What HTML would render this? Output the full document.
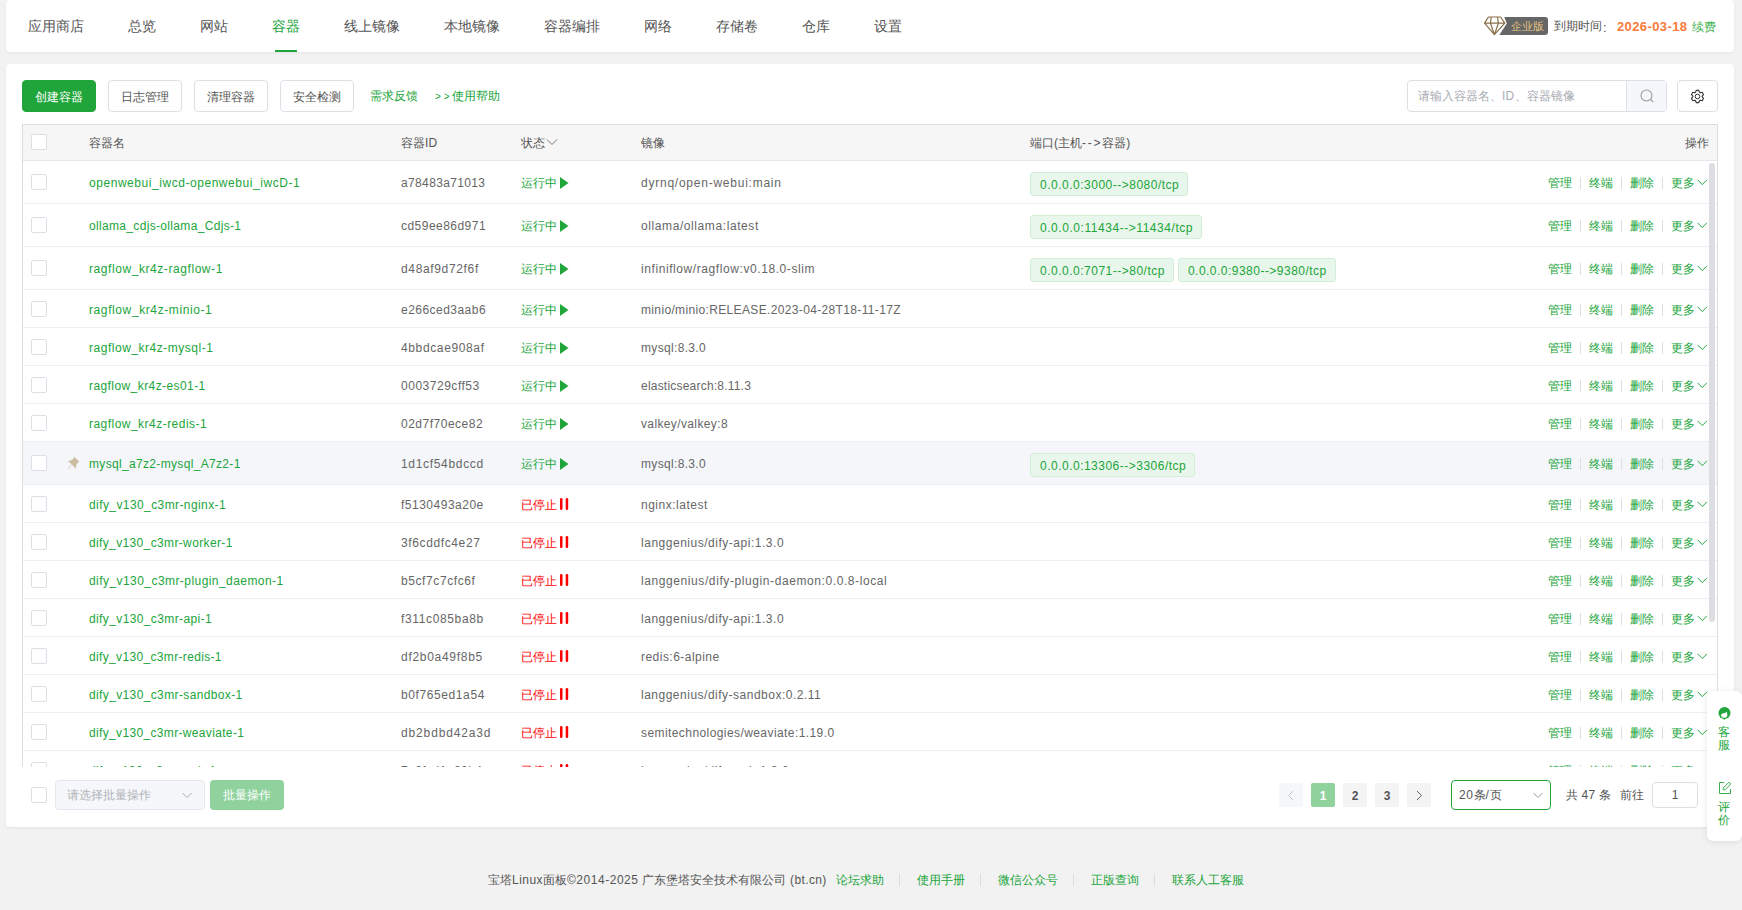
<!DOCTYPE html><html><head><meta charset="utf-8"><style>*{box-sizing:border-box;margin:0;padding:0}
html,body{width:1742px;height:910px;overflow:hidden;background:#f2f2f2;font-family:"Liberation Sans",sans-serif;color:#666;font-size:12px;font-weight:500}
.abs{position:absolute}
.card{position:absolute;background:#fff;border-radius:4px;box-shadow:0 1px 3px rgba(0,0,0,.06)}
.nav{left:6px;top:0;width:1728px;height:52px}
.nav .it{position:absolute;top:0;height:52px;line-height:52px;font-size:14px;color:#555;white-space:nowrap}
.nav .on{color:#20a53a}
.nav .ul{position:absolute;height:2px;background:#20a53a;top:50px}
.badge{left:1505px;top:17px;width:36px;height:18px;color:#e6c37f;font-size:11px;line-height:18px;white-space:nowrap}
.exp{top:17px;height:18px;line-height:18px;font-size:13px;color:#555;white-space:nowrap}
.date{color:#f97b3c;font-weight:bold;top:18px}
.renew{color:#3fb34f;font-size:12px;font-weight:500;top:18px}
.main{left:6px;top:64px;width:1728px;height:763px}
.btn{position:absolute;top:80px;height:32px;border:1px solid #dcdfe6;border-radius:4px;background:#fff;color:#555;font-size:12px;line-height:31px;padding-top:1px;text-align:center}
.btn.g{background:#20a53a;border-color:#20a53a;color:#fff}
.lnk{position:absolute;top:80px;height:32px;line-height:32px;color:#20a53a;font-size:12px;white-space:nowrap}
.srch{left:1407px;top:80px;width:260px;height:32px;border:1px solid #dcdfe6;border-radius:4px;background:#fff;overflow:hidden}
.ph{left:10px;top:0;line-height:30px;color:#a8abb2;font-size:12px;white-space:nowrap}
.sapp{left:218px;top:0;width:40px;height:30px;background:#f5f7fa;border-left:1px solid #dcdfe6}
.gear{left:1677px;top:80px;width:41px;height:32px;border:1px solid #dcdfe6;border-radius:4px;background:#fff}
.tbl{position:absolute;left:22px;top:124px;width:1696px;height:643px;overflow:hidden;border-left:1px solid #ddd;border-right:1px solid #ddd;border-top:1px solid #ddd}
.th{position:absolute;left:0;top:0;width:1694px;height:36px;background:#f6f6f6;border-bottom:1px solid #e4e7ed}
.hd{top:0;line-height:36px;color:#555}
.tr{position:absolute;left:0;width:1694px;border-bottom:1px solid #ebeef5;background:#fff}
.tr.hl{background:#f4f6fa}
.c{position:absolute;white-space:nowrap;font-size:12px}
.cb{position:absolute;width:16px;height:16px;border:1px solid #dcdfe6;border-radius:2px;background:#fff}
.nm{color:#20a53a}
.run{color:#20a53a}
.stop{color:#f00}
.tag{display:inline-block;vertical-align:top;margin-right:4px;height:24px;line-height:22px;padding:1px 8px 0 9px;border:1px solid #d2eed7;background:#e9f6eb;color:#20a53a;border-radius:3px;font-size:12px;white-space:nowrap}
.ops{position:absolute;right:9px;white-space:nowrap;color:#20a53a;font-size:12px}
.sep{display:inline-block;width:1px;height:12px;background:#dcdfe6;margin:0 8px;vertical-align:-2px}
.sb{position:absolute;left:1686px;top:38px;width:6px;height:459px;border-radius:3px;background:#dddee1}
.bsel{left:55px;top:780px;width:150px;height:30px;border:1px solid #e4e7ed;border-radius:4px;background:#f5f7fa}
.bbtn{left:210px;top:780px;width:74px;height:30px;border-radius:4px;background:#90d29d;color:#fff;font-size:12px;line-height:30px;text-align:center}
.pg{position:absolute;top:783px;width:24px;height:24px;border-radius:2px;background:#f4f4f5;color:#555;font-weight:bold;text-align:center;line-height:26px;font-size:12px}
.psel{left:1451px;top:780px;width:100px;height:30px;border:1px solid #20a53a;border-radius:4px;background:#fff}
.ptot{left:1566px;top:780px;line-height:30px;color:#555;font-size:12px;white-space:nowrap}
.pin{left:1652px;top:782px;width:46px;height:26px;border:1px solid #dcdfe6;border-radius:4px;background:#fff;text-align:center;line-height:24px;color:#555;font-size:12px}
.fpanel{left:1707px;top:691px;width:35px;height:150px;background:#fff;border-radius:6px;box-shadow:0 1px 6px rgba(0,0,0,.1)}
.fchar{left:11px;width:14px;line-height:13px;font-size:12px;color:#20a53a}
.foot{position:absolute;top:870px;height:20px;line-height:20px;font-size:12px;color:#555;white-space:nowrap}
.fl{color:#20a53a}
.fsep{position:absolute;top:874px;width:1px;height:12px;background:#ddd}
</style></head><body>
<div class="card nav">
<div class="it" style="left:22px">应用商店</div>
<div class="it" style="left:122px">总览</div>
<div class="it" style="left:194px">网站</div>
<div class="it on" style="left:266px">容器</div>
<div class="it" style="left:338px">线上镜像</div>
<div class="it" style="left:438px">本地镜像</div>
<div class="it" style="left:538px">容器编排</div>
<div class="it" style="left:638px">网络</div>
<div class="it" style="left:710px">存储卷</div>
<div class="it" style="left:796px">仓库</div>
<div class="it" style="left:868px">设置</div>
<div class="ul" style="left:269px;width:22px"></div>
<svg class="abs" style="left:1478px;top:16px" width="22" height="20" viewBox="0 0 22 20"><path d="M4.5 1H16.5L20.8 7.2L10.4 18.6L0.5 7.2Z M0.5 7.2H20.8 M7.2 1L6.5 7.2L10.4 18.6L14.4 7.2L13.5 1" fill="none" stroke="#8b7049" stroke-width="1.2" stroke-linejoin="round"/></svg>
<svg class="abs" style="left:1493px;top:17px" width="49" height="18" viewBox="0 0 49 18"><path d="M5.3 0H46Q49 0 49 3V15Q49 18 46 18H0.3L7.8 6.5Z" fill="#666"/></svg>
<div class="abs badge">企业版</div>
<div class="abs exp" style="left:1548px;font-size:12px">到期时间</div>
<div class="abs exp" style="left:1597px;top:19px">:</div>
<div class="abs exp date" style="left:1611px"><span style="letter-spacing:0.39px">2026-03-18</span></div>
<div class="abs exp renew" style="left:1686px">续费</div>
</div>
<div class="card main"></div>
<div class="btn g" style="left:22px;width:74px">创建容器</div>
<div class="btn" style="left:108px;width:74px">日志管理</div>
<div class="btn" style="left:194px;width:74px">清理容器</div>
<div class="btn" style="left:280px;width:74px">安全检测</div>
<div class="lnk" style="left:370px">需求反馈</div>
<div class="lnk" style="left:435px"><span style="font-size:10px;letter-spacing:2.8px;vertical-align:0.5px">&gt;&gt;</span>使用帮助</div>
<div class="abs srch"><div class="abs ph">请输入容器名、<span style="letter-spacing:0.28px">ID</span>、容器镜像</div><div class="abs sapp"></div><svg class="abs" style="left:232px;top:8px" width="14" height="14" viewBox="0 0 14 14"><circle cx="6.5" cy="6.5" r="5.5" fill="none" stroke="#999" stroke-width="1.1"/><path d="M10.5 10.5L13.2 13.2" stroke="#999" stroke-width="1.1"/></svg></div>
<div class="abs gear"><svg class="abs" style="left:12px;top:8px" width="15" height="15" viewBox="0 0 15 15"><path fill="none" stroke="#333" stroke-width="1.1" stroke-linejoin="round" d="M5.59 3.21 L6.19 1.34 L8.81 1.34 L9.41 3.21 L10.26 3.70 L12.18 3.28 L13.49 5.55 L12.17 7.01 L12.17 7.99 L13.49 9.45 L12.18 11.72 L10.26 11.30 L9.41 11.79 L8.81 13.66 L6.19 13.66 L5.59 11.79 L4.74 11.30 L2.82 11.72 L1.51 9.45 L2.83 7.99 L2.83 7.01 L1.51 5.55 L2.82 3.28 L4.74 3.70Z"/><circle cx="7.5" cy="7.5" r="2.3" fill="none" stroke="#333" stroke-width="1"/></svg></div>
<div class="tbl"><div class="th"><div class="cb" style="left:8px;top:9px"></div>
<div class="c hd" style="left:66px">容器名</div>
<div class="c hd" style="left:378px">容器<span style="letter-spacing:0.28px">ID</span></div>
<div class="c hd" style="left:498px">状态</div>
<div class="c hd" style="left:618px">镜像</div>
<div class="c hd" style="left:1007px">端口<span style="letter-spacing:0.06px">(</span>主机<span style="letter-spacing:1.75px">--&gt;</span>容器<span style="letter-spacing:0.06px">)</span></div>
<svg class="abs" style="left:523px;top:13px" width="12" height="8" viewBox="0 0 12 8"><path d="M1 1.5L6 6.5L11 1.5" fill="none" stroke="#777" stroke-width="1"/></svg>
<div class="c hd" style="left:1662px">操作</div></div>
<div class="tr" style="top:36px;height:43px">
<div class="cb" style="left:8px;top:13px"></div>
<div class="c nm" style="left:66px;top:1px;line-height:42px"><span style="letter-spacing:0.55px">openwebui_iwcd-openwebui_iwcD-1</span></div>
<div class="c" style="left:378px;top:1px;line-height:42px"><span style="letter-spacing:0.36px">a78483a71013</span></div>
<div class="c run" style="left:498px;top:1px;line-height:42px">运行中<svg style="vertical-align:-2px;margin-left:3px" width="9" height="12" viewBox="0 0 9 12"><path d="M0 0L8.5 6L0 12Z" fill="#20a53a"/></svg></div>
<div class="c" style="left:618px;top:1px;line-height:42px"><span style="letter-spacing:0.76px">dyrnq/open-webui:main</span></div>
<div class="c" style="left:1007px;top:11px"><div class="tag"><span style="letter-spacing:0.50px">0.0.0.0:3000--&gt;8080/tcp</span></div></div>
<div class="ops" style="top:1px;line-height:42px">管理<span class="sep"></span>终端<span class="sep"></span>删除<span class="sep"></span>更多<svg style="vertical-align:1px;margin-left:2px" width="11" height="7" viewBox="0 0 11 7"><path d="M0.6 0.8L5.3 5.6L10 0.8" fill="none" stroke="#20a53a" stroke-width="0.95"/></svg></div>
</div>
<div class="tr" style="top:79px;height:43px">
<div class="cb" style="left:8px;top:13px"></div>
<div class="c nm" style="left:66px;top:1px;line-height:42px"><span style="letter-spacing:0.33px">ollama_cdjs-ollama_Cdjs-1</span></div>
<div class="c" style="left:378px;top:1px;line-height:42px"><span style="letter-spacing:0.47px">cd59ee86d971</span></div>
<div class="c run" style="left:498px;top:1px;line-height:42px">运行中<svg style="vertical-align:-2px;margin-left:3px" width="9" height="12" viewBox="0 0 9 12"><path d="M0 0L8.5 6L0 12Z" fill="#20a53a"/></svg></div>
<div class="c" style="left:618px;top:1px;line-height:42px"><span style="letter-spacing:0.59px">ollama/ollama:latest</span></div>
<div class="c" style="left:1007px;top:11px"><div class="tag"><span style="letter-spacing:0.55px">0.0.0.0:11434--&gt;11434/tcp</span></div></div>
<div class="ops" style="top:1px;line-height:42px">管理<span class="sep"></span>终端<span class="sep"></span>删除<span class="sep"></span>更多<svg style="vertical-align:1px;margin-left:2px" width="11" height="7" viewBox="0 0 11 7"><path d="M0.6 0.8L5.3 5.6L10 0.8" fill="none" stroke="#20a53a" stroke-width="0.95"/></svg></div>
</div>
<div class="tr" style="top:122px;height:43px">
<div class="cb" style="left:8px;top:13px"></div>
<div class="c nm" style="left:66px;top:1px;line-height:42px"><span style="letter-spacing:0.57px">ragflow_kr4z-ragflow-1</span></div>
<div class="c" style="left:378px;top:1px;line-height:42px"><span style="letter-spacing:0.65px">d48af9d72f6f</span></div>
<div class="c run" style="left:498px;top:1px;line-height:42px">运行中<svg style="vertical-align:-2px;margin-left:3px" width="9" height="12" viewBox="0 0 9 12"><path d="M0 0L8.5 6L0 12Z" fill="#20a53a"/></svg></div>
<div class="c" style="left:618px;top:1px;line-height:42px"><span style="letter-spacing:0.58px">infiniflow/ragflow:v0.18.0-slim</span></div>
<div class="c" style="left:1007px;top:11px"><div class="tag"><span style="letter-spacing:0.50px">0.0.0.0:7071--&gt;80/tcp</span></div><div class="tag"><span style="letter-spacing:0.48px">0.0.0.0:9380--&gt;9380/tcp</span></div></div>
<div class="ops" style="top:1px;line-height:42px">管理<span class="sep"></span>终端<span class="sep"></span>删除<span class="sep"></span>更多<svg style="vertical-align:1px;margin-left:2px" width="11" height="7" viewBox="0 0 11 7"><path d="M0.6 0.8L5.3 5.6L10 0.8" fill="none" stroke="#20a53a" stroke-width="0.95"/></svg></div>
</div>
<div class="tr" style="top:165px;height:38px">
<div class="cb" style="left:8px;top:11px"></div>
<div class="c nm" style="left:66px;top:2px;line-height:37px"><span style="letter-spacing:0.60px">ragflow_kr4z-minio-1</span></div>
<div class="c" style="left:378px;top:2px;line-height:37px"><span style="letter-spacing:0.47px">e266ced3aab6</span></div>
<div class="c run" style="left:498px;top:2px;line-height:37px">运行中<svg style="vertical-align:-2px;margin-left:3px" width="9" height="12" viewBox="0 0 9 12"><path d="M0 0L8.5 6L0 12Z" fill="#20a53a"/></svg></div>
<div class="c" style="left:618px;top:2px;line-height:37px"><span style="letter-spacing:0.35px">minio/minio:RELEASE.2023-04-28T18-11-17Z</span></div>
<div class="ops" style="top:2px;line-height:37px">管理<span class="sep"></span>终端<span class="sep"></span>删除<span class="sep"></span>更多<svg style="vertical-align:1px;margin-left:2px" width="11" height="7" viewBox="0 0 11 7"><path d="M0.6 0.8L5.3 5.6L10 0.8" fill="none" stroke="#20a53a" stroke-width="0.95"/></svg></div>
</div>
<div class="tr" style="top:203px;height:38px">
<div class="cb" style="left:8px;top:11px"></div>
<div class="c nm" style="left:66px;top:2px;line-height:37px"><span style="letter-spacing:0.52px">ragflow_kr4z-mysql-1</span></div>
<div class="c" style="left:378px;top:2px;line-height:37px"><span style="letter-spacing:0.63px">4bbdcae908af</span></div>
<div class="c run" style="left:498px;top:2px;line-height:37px">运行中<svg style="vertical-align:-2px;margin-left:3px" width="9" height="12" viewBox="0 0 9 12"><path d="M0 0L8.5 6L0 12Z" fill="#20a53a"/></svg></div>
<div class="c" style="left:618px;top:2px;line-height:37px"><span style="letter-spacing:0.33px">mysql:8.3.0</span></div>
<div class="ops" style="top:2px;line-height:37px">管理<span class="sep"></span>终端<span class="sep"></span>删除<span class="sep"></span>更多<svg style="vertical-align:1px;margin-left:2px" width="11" height="7" viewBox="0 0 11 7"><path d="M0.6 0.8L5.3 5.6L10 0.8" fill="none" stroke="#20a53a" stroke-width="0.95"/></svg></div>
</div>
<div class="tr" style="top:241px;height:38px">
<div class="cb" style="left:8px;top:11px"></div>
<div class="c nm" style="left:66px;top:2px;line-height:37px"><span style="letter-spacing:0.42px">ragflow_kr4z-es01-1</span></div>
<div class="c" style="left:378px;top:2px;line-height:37px"><span style="letter-spacing:0.52px">0003729cff53</span></div>
<div class="c run" style="left:498px;top:2px;line-height:37px">运行中<svg style="vertical-align:-2px;margin-left:3px" width="9" height="12" viewBox="0 0 9 12"><path d="M0 0L8.5 6L0 12Z" fill="#20a53a"/></svg></div>
<div class="c" style="left:618px;top:2px;line-height:37px"><span style="letter-spacing:0.21px">elasticsearch:8.11.3</span></div>
<div class="ops" style="top:2px;line-height:37px">管理<span class="sep"></span>终端<span class="sep"></span>删除<span class="sep"></span>更多<svg style="vertical-align:1px;margin-left:2px" width="11" height="7" viewBox="0 0 11 7"><path d="M0.6 0.8L5.3 5.6L10 0.8" fill="none" stroke="#20a53a" stroke-width="0.95"/></svg></div>
</div>
<div class="tr" style="top:279px;height:38px">
<div class="cb" style="left:8px;top:11px"></div>
<div class="c nm" style="left:66px;top:2px;line-height:37px"><span style="letter-spacing:0.47px">ragflow_kr4z-redis-1</span></div>
<div class="c" style="left:378px;top:2px;line-height:37px"><span style="letter-spacing:0.50px">02d7f70ece82</span></div>
<div class="c run" style="left:498px;top:2px;line-height:37px">运行中<svg style="vertical-align:-2px;margin-left:3px" width="9" height="12" viewBox="0 0 9 12"><path d="M0 0L8.5 6L0 12Z" fill="#20a53a"/></svg></div>
<div class="c" style="left:618px;top:2px;line-height:37px"><span style="letter-spacing:0.37px">valkey/valkey:8</span></div>
<div class="ops" style="top:2px;line-height:37px">管理<span class="sep"></span>终端<span class="sep"></span>删除<span class="sep"></span>更多<svg style="vertical-align:1px;margin-left:2px" width="11" height="7" viewBox="0 0 11 7"><path d="M0.6 0.8L5.3 5.6L10 0.8" fill="none" stroke="#20a53a" stroke-width="0.95"/></svg></div>
</div>
<div class="tr hl" style="top:317px;height:43px">
<div class="cb" style="left:8px;top:13px"></div>
<svg class="abs" style="left:39px;top:10px" width="24" height="22" viewBox="0 0 24 22"><path d="M12.4 5.1L17.3 9.4L14.5 12.1L13.6 16.7L9.7 12.3L6 9.3L10.7 7.4Z" fill="#c9bc9f"/><path d="M9.9 12.1L6.2 16.7" stroke="#d6cbb4" stroke-width="0.9"/></svg>
<div class="c nm" style="left:66px;top:1px;line-height:42px"><span style="letter-spacing:0.33px">mysql_a7z2-mysql_A7z2-1</span></div>
<div class="c" style="left:378px;top:1px;line-height:42px"><span style="letter-spacing:0.68px">1d1cf54bdccd</span></div>
<div class="c run" style="left:498px;top:1px;line-height:42px">运行中<svg style="vertical-align:-2px;margin-left:3px" width="9" height="12" viewBox="0 0 9 12"><path d="M0 0L8.5 6L0 12Z" fill="#20a53a"/></svg></div>
<div class="c" style="left:618px;top:1px;line-height:42px"><span style="letter-spacing:0.33px">mysql:8.3.0</span></div>
<div class="c" style="left:1007px;top:11px"><div class="tag"><span style="letter-spacing:0.49px">0.0.0.0:13306--&gt;3306/tcp</span></div></div>
<div class="ops" style="top:1px;line-height:42px">管理<span class="sep"></span>终端<span class="sep"></span>删除<span class="sep"></span>更多<svg style="vertical-align:1px;margin-left:2px" width="11" height="7" viewBox="0 0 11 7"><path d="M0.6 0.8L5.3 5.6L10 0.8" fill="none" stroke="#20a53a" stroke-width="0.95"/></svg></div>
</div>
<div class="tr" style="top:360px;height:38px">
<div class="cb" style="left:8px;top:11px"></div>
<div class="c nm" style="left:66px;top:2px;line-height:37px"><span style="letter-spacing:0.41px">dify_v130_c3mr-nginx-1</span></div>
<div class="c" style="left:378px;top:2px;line-height:37px"><span style="letter-spacing:0.50px">f5130493a20e</span></div>
<div class="c stop" style="left:498px;top:2px;line-height:37px">已停止<svg style="vertical-align:-1px;margin-left:2px" width="10" height="12" viewBox="0 0 10 12"><rect x="1" y="0" width="2.5" height="12" rx="1.2" fill="#f00"/><rect x="6.7" y="0" width="2.5" height="12" rx="1.2" fill="#f00"/></svg></div>
<div class="c" style="left:618px;top:2px;line-height:37px"><span style="letter-spacing:0.51px">nginx:latest</span></div>
<div class="ops" style="top:2px;line-height:37px">管理<span class="sep"></span>终端<span class="sep"></span>删除<span class="sep"></span>更多<svg style="vertical-align:1px;margin-left:2px" width="11" height="7" viewBox="0 0 11 7"><path d="M0.6 0.8L5.3 5.6L10 0.8" fill="none" stroke="#20a53a" stroke-width="0.95"/></svg></div>
</div>
<div class="tr" style="top:398px;height:38px">
<div class="cb" style="left:8px;top:11px"></div>
<div class="c nm" style="left:66px;top:2px;line-height:37px"><span style="letter-spacing:0.36px">dify_v130_c3mr-worker-1</span></div>
<div class="c" style="left:378px;top:2px;line-height:37px"><span style="letter-spacing:0.62px">3f6cddfc4e27</span></div>
<div class="c stop" style="left:498px;top:2px;line-height:37px">已停止<svg style="vertical-align:-1px;margin-left:2px" width="10" height="12" viewBox="0 0 10 12"><rect x="1" y="0" width="2.5" height="12" rx="1.2" fill="#f00"/><rect x="6.7" y="0" width="2.5" height="12" rx="1.2" fill="#f00"/></svg></div>
<div class="c" style="left:618px;top:2px;line-height:37px"><span style="letter-spacing:0.52px">langgenius/dify-api:1.3.0</span></div>
<div class="ops" style="top:2px;line-height:37px">管理<span class="sep"></span>终端<span class="sep"></span>删除<span class="sep"></span>更多<svg style="vertical-align:1px;margin-left:2px" width="11" height="7" viewBox="0 0 11 7"><path d="M0.6 0.8L5.3 5.6L10 0.8" fill="none" stroke="#20a53a" stroke-width="0.95"/></svg></div>
</div>
<div class="tr" style="top:436px;height:38px">
<div class="cb" style="left:8px;top:11px"></div>
<div class="c nm" style="left:66px;top:2px;line-height:37px"><span style="letter-spacing:0.44px">dify_v130_c3mr-plugin_daemon-1</span></div>
<div class="c" style="left:378px;top:2px;line-height:37px"><span style="letter-spacing:0.59px">b5cf7c7cfc6f</span></div>
<div class="c stop" style="left:498px;top:2px;line-height:37px">已停止<svg style="vertical-align:-1px;margin-left:2px" width="10" height="12" viewBox="0 0 10 12"><rect x="1" y="0" width="2.5" height="12" rx="1.2" fill="#f00"/><rect x="6.7" y="0" width="2.5" height="12" rx="1.2" fill="#f00"/></svg></div>
<div class="c" style="left:618px;top:2px;line-height:37px"><span style="letter-spacing:0.59px">langgenius/dify-plugin-daemon:0.0.8-local</span></div>
<div class="ops" style="top:2px;line-height:37px">管理<span class="sep"></span>终端<span class="sep"></span>删除<span class="sep"></span>更多<svg style="vertical-align:1px;margin-left:2px" width="11" height="7" viewBox="0 0 11 7"><path d="M0.6 0.8L5.3 5.6L10 0.8" fill="none" stroke="#20a53a" stroke-width="0.95"/></svg></div>
</div>
<div class="tr" style="top:474px;height:38px">
<div class="cb" style="left:8px;top:11px"></div>
<div class="c nm" style="left:66px;top:2px;line-height:37px"><span style="letter-spacing:0.38px">dify_v130_c3mr-api-1</span></div>
<div class="c" style="left:378px;top:2px;line-height:37px"><span style="letter-spacing:0.64px">f311c085ba8b</span></div>
<div class="c stop" style="left:498px;top:2px;line-height:37px">已停止<svg style="vertical-align:-1px;margin-left:2px" width="10" height="12" viewBox="0 0 10 12"><rect x="1" y="0" width="2.5" height="12" rx="1.2" fill="#f00"/><rect x="6.7" y="0" width="2.5" height="12" rx="1.2" fill="#f00"/></svg></div>
<div class="c" style="left:618px;top:2px;line-height:37px"><span style="letter-spacing:0.52px">langgenius/dify-api:1.3.0</span></div>
<div class="ops" style="top:2px;line-height:37px">管理<span class="sep"></span>终端<span class="sep"></span>删除<span class="sep"></span>更多<svg style="vertical-align:1px;margin-left:2px" width="11" height="7" viewBox="0 0 11 7"><path d="M0.6 0.8L5.3 5.6L10 0.8" fill="none" stroke="#20a53a" stroke-width="0.95"/></svg></div>
</div>
<div class="tr" style="top:512px;height:38px">
<div class="cb" style="left:8px;top:11px"></div>
<div class="c nm" style="left:66px;top:2px;line-height:37px"><span style="letter-spacing:0.34px">dify_v130_c3mr-redis-1</span></div>
<div class="c" style="left:378px;top:2px;line-height:37px"><span style="letter-spacing:0.71px">df2b0a49f8b5</span></div>
<div class="c stop" style="left:498px;top:2px;line-height:37px">已停止<svg style="vertical-align:-1px;margin-left:2px" width="10" height="12" viewBox="0 0 10 12"><rect x="1" y="0" width="2.5" height="12" rx="1.2" fill="#f00"/><rect x="6.7" y="0" width="2.5" height="12" rx="1.2" fill="#f00"/></svg></div>
<div class="c" style="left:618px;top:2px;line-height:37px"><span style="letter-spacing:0.47px">redis:6-alpine</span></div>
<div class="ops" style="top:2px;line-height:37px">管理<span class="sep"></span>终端<span class="sep"></span>删除<span class="sep"></span>更多<svg style="vertical-align:1px;margin-left:2px" width="11" height="7" viewBox="0 0 11 7"><path d="M0.6 0.8L5.3 5.6L10 0.8" fill="none" stroke="#20a53a" stroke-width="0.95"/></svg></div>
</div>
<div class="tr" style="top:550px;height:38px">
<div class="cb" style="left:8px;top:11px"></div>
<div class="c nm" style="left:66px;top:2px;line-height:37px"><span style="letter-spacing:0.37px">dify_v130_c3mr-sandbox-1</span></div>
<div class="c" style="left:378px;top:2px;line-height:37px"><span style="letter-spacing:0.60px">b0f765ed1a54</span></div>
<div class="c stop" style="left:498px;top:2px;line-height:37px">已停止<svg style="vertical-align:-1px;margin-left:2px" width="10" height="12" viewBox="0 0 10 12"><rect x="1" y="0" width="2.5" height="12" rx="1.2" fill="#f00"/><rect x="6.7" y="0" width="2.5" height="12" rx="1.2" fill="#f00"/></svg></div>
<div class="c" style="left:618px;top:2px;line-height:37px"><span style="letter-spacing:0.50px">langgenius/dify-sandbox:0.2.11</span></div>
<div class="ops" style="top:2px;line-height:37px">管理<span class="sep"></span>终端<span class="sep"></span>删除<span class="sep"></span>更多<svg style="vertical-align:1px;margin-left:2px" width="11" height="7" viewBox="0 0 11 7"><path d="M0.6 0.8L5.3 5.6L10 0.8" fill="none" stroke="#20a53a" stroke-width="0.95"/></svg></div>
</div>
<div class="tr" style="top:588px;height:38px">
<div class="cb" style="left:8px;top:11px"></div>
<div class="c nm" style="left:66px;top:2px;line-height:37px"><span style="letter-spacing:0.34px">dify_v130_c3mr-weaviate-1</span></div>
<div class="c" style="left:378px;top:2px;line-height:37px"><span style="letter-spacing:0.86px">db2bdbd42a3d</span></div>
<div class="c stop" style="left:498px;top:2px;line-height:37px">已停止<svg style="vertical-align:-1px;margin-left:2px" width="10" height="12" viewBox="0 0 10 12"><rect x="1" y="0" width="2.5" height="12" rx="1.2" fill="#f00"/><rect x="6.7" y="0" width="2.5" height="12" rx="1.2" fill="#f00"/></svg></div>
<div class="c" style="left:618px;top:2px;line-height:37px"><span style="letter-spacing:0.42px">semitechnologies/weaviate:1.19.0</span></div>
<div class="ops" style="top:2px;line-height:37px">管理<span class="sep"></span>终端<span class="sep"></span>删除<span class="sep"></span>更多<svg style="vertical-align:1px;margin-left:2px" width="11" height="7" viewBox="0 0 11 7"><path d="M0.6 0.8L5.3 5.6L10 0.8" fill="none" stroke="#20a53a" stroke-width="0.95"/></svg></div>
</div>
<div class="tr" style="top:626px;height:38px">
<div class="cb" style="left:8px;top:11px"></div>
<div class="c nm" style="left:66px;top:2px;line-height:37px"><span style="letter-spacing:0.29px">dify_v130_c3mr-web-1</span></div>
<div class="c" style="left:378px;top:2px;line-height:37px"><span style="letter-spacing:0.45px">7e0fcd1e20b4</span></div>
<div class="c stop" style="left:498px;top:2px;line-height:37px">已停止<svg style="vertical-align:-1px;margin-left:2px" width="10" height="12" viewBox="0 0 10 12"><rect x="1" y="0" width="2.5" height="12" rx="1.2" fill="#f00"/><rect x="6.7" y="0" width="2.5" height="12" rx="1.2" fill="#f00"/></svg></div>
<div class="c" style="left:618px;top:2px;line-height:37px"><span style="letter-spacing:0.48px">langgenius/dify-web:1.3.0</span></div>
<div class="ops" style="top:2px;line-height:37px">管理<span class="sep"></span>终端<span class="sep"></span>删除<span class="sep"></span>更多<svg style="vertical-align:1px;margin-left:2px" width="11" height="7" viewBox="0 0 11 7"><path d="M0.6 0.8L5.3 5.6L10 0.8" fill="none" stroke="#20a53a" stroke-width="0.95"/></svg></div>
</div>
<div class="sb"></div></div>
<div class="cb" style="left:31px;top:787px"></div>
<div class="abs bsel"><div class="abs" style="left:11px;top:0;line-height:28px;color:#b0b3b9">请选择批量操作</div><svg class="abs" style="left:126px;top:11px" width="10" height="7" viewBox="0 0 10 7"><path d="M0.5 1L5 5.5L9.5 1" fill="none" stroke="#aaa" stroke-width="1"/></svg></div>
<div class="abs bbtn">批量操作</div>
<div class="pg" style="left:1279px;background:#f5f7fa"><svg style="vertical-align:-1px" width="8" height="11" viewBox="0 0 8 11"><path d="M6 1L1.5 5.5L6 10" fill="none" stroke="#c0c4cc" stroke-width="1"/></svg></div>
<div class="pg" style="left:1311px;background:#90d29d;color:#fff">1</div>
<div class="pg" style="left:1343px">2</div>
<div class="pg" style="left:1375px">3</div>
<div class="pg" style="left:1407px"><svg style="vertical-align:-1px" width="8" height="11" viewBox="0 0 8 11"><path d="M2 1L6.5 5.5L2 10" fill="none" stroke="#606266" stroke-width="1"/></svg></div>
<div class="abs psel"><div class="abs" style="left:7px;top:0;line-height:28px;color:#555"><span style="letter-spacing:0.59px">20</span>条<span style="letter-spacing:1.13px">/</span>页</div><svg class="abs" style="left:81px;top:11px" width="10" height="7" viewBox="0 0 10 7"><path d="M0.5 1L5 5.5L9.5 1" fill="none" stroke="#999" stroke-width="1"/></svg></div>
<div class="abs ptot">共<span style="letter-spacing:0.24px"> 47 </span>条</div>
<div class="abs ptot" style="left:1620px">前往</div>
<div class="abs pin">1</div>
<div class="abs fpanel"><svg class="abs" style="left:11px;top:16px" width="13" height="13" viewBox="0 0 13 13"><circle cx="6.5" cy="6" r="6" fill="#20a53a"/><path d="M2.8 8.2Q3.5 5.8 6.2 6.2Q8 5.5 8.8 4.8Q9.6 7 9.2 9.2Q8 11.2 6 11.2Q3.8 11 2.8 8.2Z" fill="#fff"/><circle cx="6.3" cy="11.6" r="1.1" fill="#20a53a"/></svg><div class="abs fchar" style="top:35px">客服</div><svg class="abs" style="left:11px;top:90px" width="14" height="14" viewBox="0 0 14 14"><path d="M6 1.5H1.5V12.5H12.5V8" fill="none" stroke="#3aae50" stroke-width="1"/><path d="M11 1.2L12.8 3L7 8.8H5.2V7Z" fill="none" stroke="#3aae50" stroke-width="1"/></svg><div class="abs fchar" style="top:110px">评价</div></div>
<div class="foot" style="left:488px">宝塔<span style="letter-spacing:0.46px">Linux</span>面板<span style="letter-spacing:0.53px">©2014-2025 </span>广东堡塔安全技术有限公司<span style="letter-spacing:0.36px"> (bt.cn)</span></div>
<div class="foot fl" style="left:836px">论坛求助</div>
<div class="foot fl" style="left:917px">使用手册</div>
<div class="foot fl" style="left:998px">微信公众号</div>
<div class="foot fl" style="left:1091px">正版查询</div>
<div class="foot fl" style="left:1172px">联系人工客服</div>
<div class="fsep" style="left:899px"></div>
<div class="fsep" style="left:980px"></div>
<div class="fsep" style="left:1073px"></div>
<div class="fsep" style="left:1154px"></div>
</body></html>
